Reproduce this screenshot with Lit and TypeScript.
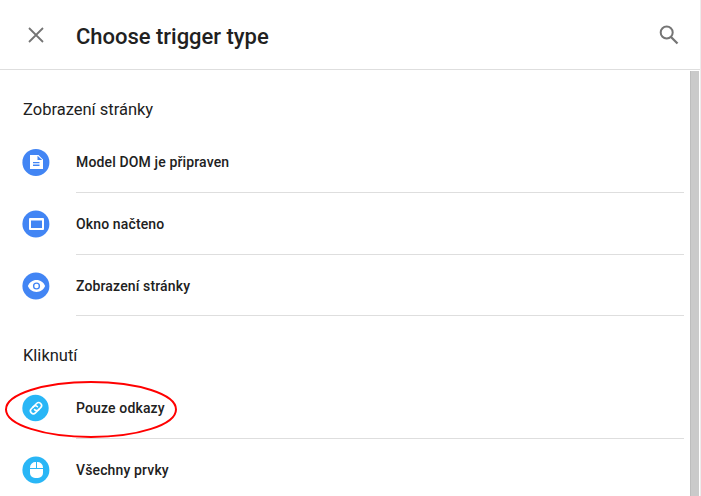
import { LitElement, html, css, svg } from "lit";
import { customElement, property } from "lit/decorators.js";

const glyphs: Record<string, unknown> = {
  page: svg`<circle cx="13.9" cy="14.4" r="13.5"/>
    <path fill="#fff" fill-rule="evenodd" d="M8 7h8.500L21 11.500V21H8zM15.500 7.800V12h4.700zM11 14h6.500v1.300H11zM11 16.600h6.500V18H11z"/>`,
  window: svg`<circle cx="13.9" cy="14" r="13.5"/>
    <path fill="#fff" fill-rule="evenodd" d="M8 8h13a1 1 0 0 1 1 1v10a1 1 0 0 1-1 1H8a1 1 0 0 1-1-1V9a1 1 0 0 1 1-1zM9 10.500v7.500h11v-7.500z"/>`,
  eye: svg`<circle cx="13.9" cy="14" r="13.5"/>
    <path fill="#fff" d="M5.900 14c1.400-3.500 4.700-5.900 8.600-5.900s7.200 2.400 8.600 5.900c-1.400 3.500-4.700 5.900-8.600 5.900S7.300 17.500 5.900 14z"/>
    <circle cx="14.500" cy="14" r="2.900" fill="#fff" stroke="#4285f4" stroke-width="1.400"/>`,
  link: svg`<circle cx="13.500" cy="14" r="13.200"/>
    <g fill="none" stroke="#fff" stroke-width="1.600" stroke-linecap="round" transform="translate(14 14.200) rotate(-45)">
      <path d="M1.600 2.900H-3.700a2.900 2.900 0 0 1 0-5.800H-.6a2.900 2.900 0 0 1 2.700 2.900"/>
      <path d="M-1.600-2.900H3.700a2.900 2.900 0 0 1 0 5.800H.6a2.900 2.900 0 0 1-2.700-2.900"/>
    </g>`,
  mouse: svg`<circle cx="13.900" cy="14" r="13.500"/>
    <path fill="#fff" d="M14 6v6H8v-.5A5.500 5.500 0 0 1 14 6zM15 6v6h6v-.5A5.500 5.500 0 0 0 15 6zM8 13h13v4a5 5 0 0 1-5 5h-3a5 5 0 0 1-5-5z"/>`,
};

@customElement("trigger-row")
class TriggerRow extends LitElement {
  @property() label = "";
  @property() icon = "page";

  static styles = css`
    :host { display: flex; height: 62px; padding-left: 22px; box-sizing: border-box; }
    .icon { width: 28px; height: 28px; margin: 17px 26px 0 0; flex: none; fill: #4285f4; }
    .icon.link, .icon.mouse { fill: #29b6f6; }
    .label {
      flex: 1; box-sizing: border-box; border-bottom: 1px solid #dedede; padding-top: 1px;
      font: 500 14px/61px Roboto, sans-serif; letter-spacing: .14px;
      color: #212121; white-space: nowrap;
    }
  `;

  render() {
    return html`<svg class="icon ${this.icon}" viewBox="0 0 28 28">${glyphs[this.icon]}</svg>
      <div class="label">${this.label}</div>`;
  }
}

@customElement("app-root")
class AppRoot extends LitElement {
  static styles = css`
    :host {
      display: flex; flex-direction: column; box-sizing: border-box; position: relative;
      width: 701px; height: 496px; overflow: hidden; background: #fff;
      border-right: 1px solid #ececec; font-family: Roboto, sans-serif; color: #212121;
    }
    header { display: flex; align-items: center; flex: none; height: 69px; border-bottom: 1px solid #dedede; }
    .close { width: 16px; height: 16px; margin-left: 28px; }
    .title { flex: 1; margin: 5px 0 0 32px; font-size: 22px; font-weight: 500; line-height: 30px; letter-spacing: -.02px; }
    .search { width: 20px; height: 20px; margin-right: 21px; }
    .body { display: flex; flex: 1; min-height: 0; }
    .list { flex: 1; padding-right: 6px; overflow: hidden; }
    .heading { margin: 0; height: 61px; padding-left: 23px; font-size: 16.500px; font-weight: 400; line-height: 79px; }
    .last { height: 61px; }
    .bar { width: 9px; margin: 1px 1px 0 0; box-sizing: border-box; background: #cacaca; border-left: 1px solid #bdbdbd; }
    .mark { position: absolute; left: 4px; top: 380px; width: 174px; height: 59px; }
  `;

  render() {
    return html`
      <header>
        <svg class="close" viewBox="0 0 16 16"><path d="M1 1l14 14M15 1L1 15" stroke="#757575" stroke-width="1.800"/></svg>
        <div class="title">Choose trigger type</div>
        <svg class="search" viewBox="0 0 20 20" fill="none" stroke="#757575">
          <circle cx="7.700" cy="7.500" r="6" stroke-width="2"/><path d="M12 12l6.500 6.500" stroke-width="2.300"/>
        </svg>
      </header>
      <div class="body">
        <div class="list">
          <h2 class="heading">Zobrazení stránky</h2>
          <trigger-row icon="page" label="Model DOM je připraven"></trigger-row>
          <trigger-row icon="window" label="Okno načteno"></trigger-row>
          <trigger-row class="last" icon="eye" label="Zobrazení stránky"></trigger-row>
          <h2 class="heading">Kliknutí</h2>
          <trigger-row icon="link" label="Pouze odkazy"></trigger-row>
          <trigger-row icon="mouse" label="Všechny prvky"></trigger-row>
        </div>
        <div class="bar"></div>
      </div>
      <svg class="mark" viewBox="0 0 174 59">
        <ellipse cx="87" cy="29.400" rx="85" ry="27.500" fill="none" stroke="#ff0000" stroke-width="2"/>
      </svg>`;
  }
}
